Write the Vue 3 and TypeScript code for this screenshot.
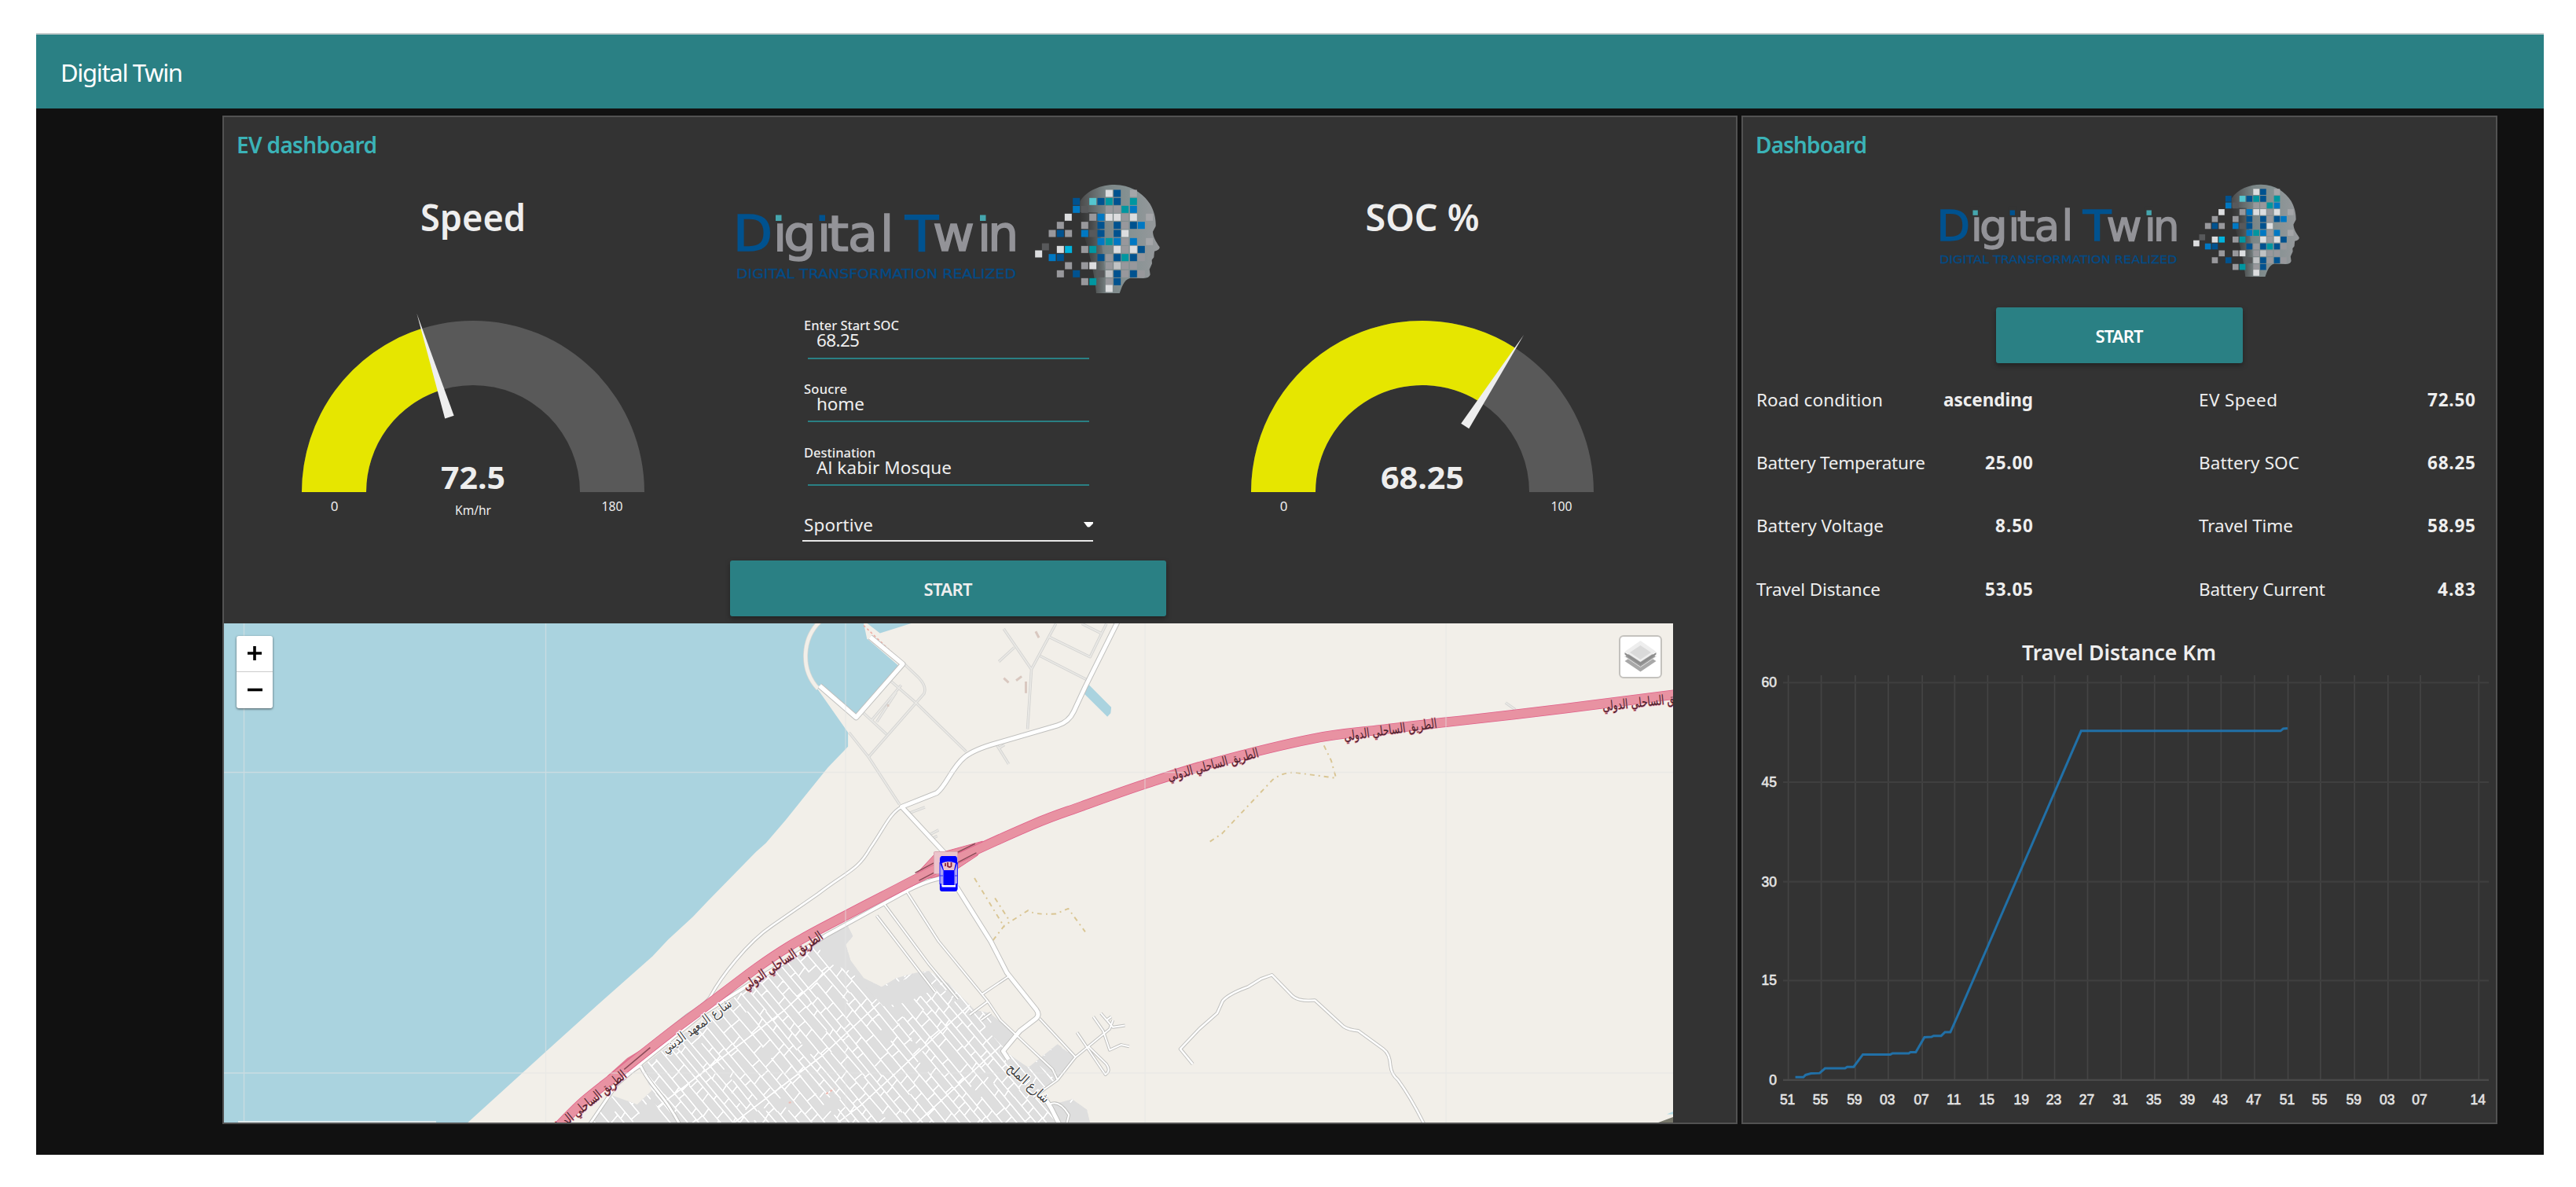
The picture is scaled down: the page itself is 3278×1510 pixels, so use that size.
<script setup lang="ts">
interface Gauge { title: string; value: number; text: string; unit: string; max: number; tw: number; vw: number }
interface Road { d: string; w: number }

const vFit = {
  mounted(el: HTMLElement, binding: { value: number }) {
    const n = (el.textContent ?? '').trim().length
    if (n < 2) return
    const spacing = (binding.value - el.getBoundingClientRect().width) / (n - 1)
    el.style.letterSpacing = `${spacing}px`
    el.style.marginRight = `${-spacing}px`
  },
}

const gauges: Gauge[] = [
  { title: 'Speed', value: 72.5, text: '72.5', unit: 'Km/hr', max: 180, tw: 134, vw: 82 },
  { title: 'SOC %', value: 68.25, text: '68.25', unit: '', max: 100, tw: 145, vw: 106 },
]
const CX = 300
const CY = 406
function polar(r: number, f: number) {
  const a = Math.PI * f
  return [CX - r * Math.cos(a), CY - r * Math.sin(a)]
}
function arc(from: number, to: number) {
  const [a, b, c, d] = [polar(218, from), polar(218, to), polar(136, to), polar(136, from)]
  return `M${a} A218 218 0 0 1 ${b} L${c} A136 136 0 0 0 ${d} Z`
}
function needle(f: number) {
  const [x, y] = polar(100, f)
  const a = Math.PI * f
  const nx = Math.sin(a) * 6
  const ny = -Math.cos(a) * 6
  return `M${x + nx} ${y + ny} L${polar(238, f)} L${x - nx} ${y - ny} Z`
}

const fields = [
  { label: 'Enter Start SOC', value: '68.25', lw: 121, vw: 55 },
  { label: 'Soucre', value: 'home', lw: 55, vw: 61 },
  { label: 'Destination', value: 'Al kabir Mosque', lw: 91, vw: 172 },
]
const readings = [
  { label: 'Road condition', value: 'ascending', lw: 161, vw: 114 },
  { label: 'EV Speed', value: '72.50', lw: 100, vw: 61 },
  { label: 'Battery Temperature', value: '25.00', lw: 215, vw: 61 },
  { label: 'Battery SOC', value: '68.25', lw: 128, vw: 61 },
  { label: 'Battery Voltage', value: '8.50', lw: 162, vw: 48 },
  { label: 'Travel Time', value: '58.95', lw: 120, vw: 61 },
  { label: 'Travel Distance', value: '53.05', lw: 158, vw: 61 },
  { label: 'Battery Current', value: '4.83', lw: 161, vw: 48 },
]

// Logo
const ink: Record<string, string> = {
  W: '#dcdddf', B: '#00528f', U: '#0078c3', T: '#0096a0', G: '#98989c', L: '#a5a6a9', D: '#58595b', C: '#55c6cf', Y: '#00b2dc', S: '#c0c2c4',
}
const mosaic: [number, string][] = [
  [78, '574W 605B 667L'],
  [109, '449B 512C 543B 574T 605B 667T'],
  [139, '449U 481D 574G 605G 635T 667U'],
  [169, '418W 512G 543U 574W 605W 635G 667W 728L'],
  [200, '388G 481G 543B 605B 635G 667B 697U'],
  [231, '357G 388B 419G 481U 512D 543B 605B 635W'],
  [262, '543U 574T 605U 635G 667U 728L'],
  [282, '331D'],
  [309, '305W'],
  [292, '388W 419Y 481G 512T 605W 635G 667W 697B'],
  [323, '357U 388B 543B 574G 605B 635T 667B 697G'],
  [354, '419G 481G 512W 574G 605S 635G 667G'],
  [385, '388G 449B 543D 574S 605B 635G 667B 697G'],
  [415, '481G 512T 574G 605B'],
  [441, '574W'],
]
const cells = mosaic.flatMap(([y, row]) =>
  row.split(' ').map((c) => ({ x: parseInt(c) - 13.5, y: y - 13.5, c: ink[c.slice(-1)] })),
)

// Chart
const cx = (v: number) => 2200 + v / 1.4545
const cy = (v: number) => 780 + v / 2.148
const xt = [110, 171, 234, 295, 358, 418, 479, 543, 603, 664, 726, 788, 850, 911, 973, 1035, 1095, 1158, 1220, 1280, 1388]
const xl = ['51', '55', '59', '03', '07', '11', '15', '19', '23', '27', '31', '35', '39', '43', '47', '51', '55', '59', '03', '07', '14']
const yTicks = [['60', 192], ['45', 464], ['30', 736], ['15', 1006], ['0', 1278]].map(([t, v]) => ({ t, y: cy(v as number) }))
const xTicks = xt.map((v, i) => ({ t: xl[i], x: cx(v) }))
const series = '123,1270 138,1270 142,1264 152,1260 168,1259 178,1246 215,1246 219,1242 231,1242 248,1208 299,1208 303,1205 333,1205 336,1202 346,1202 362,1161 375,1160 379,1157 393,1157 400,1147 410,1147 428,1087 652,324 1021,324 1026,318 1034,317'
  .split(' ').map((p) => { const [a, b] = p.split(',').map(Number); return `${cx(a)},${cy(b)}` }).join(' ')

// Map
function smooth(list: string) {
  const p = list.split(' ').map((s) => s.split(',').map(Number))
  let d = `M${p[0]}`
  for (let i = 0; i < p.length - 1; i++) {
    const a = p[Math.max(i - 1, 0)], b = p[i], c = p[i + 1], e = p[Math.min(i + 2, p.length - 1)]
    d += ` C${b[0] + (c[0] - a[0]) / 6},${b[1] + (c[1] - a[1]) / 6} ${c[0] - (e[0] - b[0]) / 6},${c[1] - (e[1] - b[1]) / 6} ${c}`
  }
  return d
}
const highway = smooth('-455,1460 -378,1390 -281,1318 -120,1200 10,1110 150,1012 250,950 350,898 540,806 740,712 1000,602 1150,550 1343,487 1558,425 1857,358 2067,332 2266,311 2477,289 2732,260 2975,231')
const roads: Road[] = [
  { w: 5.5, d: 'M345 207 L457 297 L600 145 L500 68' },
  { w: 5, d: 'M1262 20 L1160 210 L1125 280 Q1110 310 1075 320 L890 370 Q820 388 790 410 C750 440 735 490 705 512 L597 552 L735 690' },
  { w: 5, d: 'M765 780 L870 935 L920 1025 L1010 1130 Q1022 1145 1008 1156 L960 1190 L908 1248 L925 1272 M1035 1380 L1055 1410 L1085 1465' },
  { w: 4, d: 'M740 752 Q690 755 615 790 L365 918 L215 1008 L-20 1145 L-200 1280 L-300 1360' },
  { w: 2.6, d: 'M597 552 C560 570 545 610 500 670 C460 735 430 735 340 800 L200 890 C120 940 40 1040 10 1092 Q0 1110 -60 1145 L-175 1230' },
  { w: 3, d: 'M-205 1290 Q-190 1320 -150 1365 Q-110 1410 -80 1465 M-205 1290 L-290 1340 M-290 1360 L-360 1455' },
  { w: 2, d: 'M610 790 L710 935 L860 1105 L900 1160 L1060 1300 L1075 1330 L1000 1380 M540 825 L680 1000 L770 1100 M520 862 L700 1080 M845 1085 L925 1035 M805 1145 L860 1107 M1020 1155 L1130 1265 L1075 1330 M840 1160 L870 1140 M1130 1265 L1235 1185 L1245 1160 M1135 1195 L1222 1315 Q1240 1305 1225 1285 L1170 1235 M1185 1150 L1215 1190 L1235 1245 L1270 1230 L1295 1235 M1208 1140 L1245 1180 L1282 1175 M1225 1160 L1240 1150' },
  { w: 2.5, d: 'M1490 1285 L1452 1242 L1510 1185 L1565 1140 L1582 1105 Q1600 1085 1660 1065 L1700 1042 L1733 1031 L1795 1090 Q1815 1108 1865 1103 L1953 1178 Q1970 1188 1998 1190 L2075 1242 Q2095 1255 2097 1290 Q2100 1315 2120 1330 Q2160 1380 2205 1465' },
  { w: 2, d: 'M1050 1400 Q1080 1385 1110 1430 L1100 1465' },
]
const lanes =
  'M435 340 L495 410 L590 545 M495 410 L665 230 Q675 210 650 185 L605 145 M565 195 L640 255 L795 395 M480 285 L550 345 M505 305 L595 205 M520 310 L580 225 M910 45 L995 160 L983 330 M895 138 L942 98 M995 160 L1070 30 M1050 68 L1175 125 L1225 30 M1022 122 L1165 190 M1150 30 L1210 58 M885 370 L925 430 M895 385 L912 375 M620 570 L668 553 M685 630 L710 618 M690 642 L706 635 M2450 255 L2480 275'
const tracks = 'M820 755 L912 895 M883 812 L930 880 M877 932 L912 890 L985 847 Q1000 860 1070 857 L1108 842 L1160 908 M1543 651 L1580 628 L1735 475 Q1770 450 1810 455 L1930 470 L1915 420 L1890 372'
const city = 'M430 890 L447 920 L425 945 L440 990 L480 1040 L535 1065 L580 1040 L640 1025 L680 1020 L740 1055 L820 1130 L868 1140 L945 1200 L912 1248 L985 1295 L1075 1228 L1130 1265 L1075 1330 L1010 1375 L1060 1400 L1120 1385 L1165 1415 L1178 1465 L-375 1465 L-290 1375 L-215 1400 L-170 1360 L-205 1295 L-60 1190 L150 1050 L360 915 Z'

let seed = 11
const rnd = () => { seed = (seed * 16807) % 2147483647; return seed / 2147483647 }
function streets() {
  const a = (50 * Math.PI) / 180
  const pt = (u: number, v: number) =>
    `${(765 + u * Math.cos(a) - v * Math.sin(a)).toFixed(1)} ${(557 + u * Math.sin(a) + v * Math.cos(a)).toFixed(1)}`
  let d = ''
  for (let v = -330; v < 400;) {
    const step = (v > 90 && v < 190 ? 6 : 8) + rnd() * 7
    for (let u = -330; u < 330;) {
      const len = 40 + rnd() * 160
      d += `M${pt(u, v)} L${pt(u + len, v + rnd() * 4 - 2)}`
      u += len + (rnd() < 0.3 ? 18 : 0)
    }
    for (let u = -330 + rnd() * 20; u < 330; u += 10 + rnd() * 34) d += `M${pt(u, v)} L${pt(u + rnd() * 3, v + step)}`
    v += step
  }
  for (const u of [-95, -20, 60, 125]) d += `M${pt(u, -260)} L${pt(u + 12, 0)} L${pt(u - 6, 380)}`
  return d
}
const streetPath = streets()

const labels = [
  { t: 'الطريق الساحلي الدولي', x: 1485, y: 141, r: -8, w: 119 },
  { t: 'الطريق الساحلي الدولي', x: 1260, y: 185, r: -15, w: 119 },
  { t: 'الطريق الساحلي الدولي', x: 1814, y: 105, r: -6, w: 119 },
  { t: 'الطريق الساحلي الدولي', x: 714, y: 434, r: -34, w: 119 },
  { t: 'الطريق الساحلي الدولي', x: 467, y: 614, r: -39, w: 119 },
  { t: 'شارع المعهد الديني', x: 605, y: 517, r: -36, w: 105 },
  { t: 'شارع الملح', x: 1020, y: 589, r: 42, w: 66 },
]
</script>

<template>
  <svg class="defs" width="0" height="0">
    <defs>
      <linearGradient id="skull" x1="0" x2="1">
        <stop offset="0" stop-color="#4a4a4a" />
        <stop offset=".12" stop-color="#5c6061" />
        <stop offset=".32" stop-color="#7a8586" />
        <stop offset=".6" stop-color="#859192" />
        <stop offset="1" stop-color="#97999c" />
      </linearGradient>
      <linearGradient id="nape" x1="0" x2="1">
        <stop offset="0" stop-color="#333" />
        <stop offset="1" stop-color="#333" stop-opacity="0" />
      </linearGradient>
      <symbol id="brand" viewBox="0 0 560 160">
        <g font-family="DejaVu Sans, sans-serif" font-size="62" stroke-width="1.600">
          <g fill="#00528f" stroke="#00528f">
            <text y="98.500" x="3" textLength="50" lengthAdjust="spacingAndGlyphs">D</text>
            <text y="98.500" x="222" textLength="42" lengthAdjust="spacingAndGlyphs">T</text>
          </g>
          <g fill="#939398" stroke="#939398">
            <text y="98.500" x="54">i</text>
            <text y="98.500" x="67" textLength="42" lengthAdjust="spacingAndGlyphs">g</text>
            <text y="98.500" x="110">i</text>
            <text y="98.500" x="123" textLength="27" lengthAdjust="spacingAndGlyphs">t</text>
            <text y="98.500" x="149">a</text>
            <text y="98.500" x="190">l</text>
            <text y="98.500" x="257" textLength="53" lengthAdjust="spacingAndGlyphs">w</text>
            <text y="98.500" x="314 327">in</text>
          </g>
        </g>
        <rect x="54" y="48" width="13" height="14" fill="#333" />
        <rect x="57" y="53.500" width="7.500" height="7.500" fill="#45a6ae" />
        <rect x="110" y="48" width="13" height="14" fill="#333" />
        <rect x="112.500" y="53.500" width="7.500" height="7.500" fill="#00528f" />
        <rect x="314" y="48" width="13" height="14" fill="#333" />
        <rect x="317" y="53.500" width="7.500" height="7.500" fill="#45a6ae" />
        <text x="7" y="133.500" fill="#034b86" stroke="#034b86" stroke-width=".3" font-family="DejaVu Sans, sans-serif" font-size="16.500" textLength="356" lengthAdjust="spacingAndGlyphs">DIGITAL TRANSFORMATION REALIZED</text>
        <g transform="translate(290 0) scale(.33333)">
          <path d="M595 45 C660 45 705 80 730 118 C748 148 753 180 752 203 L741 224 C742 245 752 260 767 283 Q768 293 747 299 L745 322 L737 332 L738 346 L728 368 L731 388 Q728 402 705 402 L655 401 C628 408 622 440 614 459 L525 459 C520 400 505 330 485 260 C470 210 460 160 463 108 C490 65 545 45 595 45 Z" fill="url(#skull)" />
          <path d="M455 150 H530 L570 459 H515 L480 260 Z" fill="url(#nape)" />
          <rect v-for="(c, i) in cells" :key="i" :x="c.x" :y="c.y" width="27" height="27" :fill="c.c" />
        </g>
      </symbol>
    </defs>
  </svg>

  <div class="page">
    <div class="app">
      <header><span v-fit="156">Digital Twin</span></header>
      <main>
        <section class="panel ev">
          <h2><span v-fit="179">EV dashboard</span></h2>
          <div class="upper">
            <template v-for="(g, i) in gauges" :key="g.title">
              <svg class="gauge" width="600" height="573" viewBox="0 0 600 573" text-anchor="middle">
                <text x="300" y="74" font-size="47" font-weight="600" :textLength="g.tw" lengthAdjust="spacingAndGlyphs">{{ g.title }}</text>
                <path :d="arc(0, 1)" fill="#595959" />
                <path :d="arc(0, g.value / g.max)" fill="#e6e600" />
                <path :d="needle(g.value / g.max)" fill="#eee" />
                <text x="300" y="401.500" font-size="39.500" font-weight="700" :textLength="g.vw" lengthAdjust="spacingAndGlyphs">{{ g.text }}</text>
                <text v-if="g.unit" x="300" y="435" font-size="17" textLength="46" lengthAdjust="spacingAndGlyphs">{{ g.unit }}</text>
                <text x="123.500" y="430" font-size="17">0</text>
                <text x="477" y="430" font-size="17" textLength="27" lengthAdjust="spacingAndGlyphs">{{ g.max }}</text>
              </svg>
              <div v-if="i === 0" class="center">
                <svg class="logo" width="560" height="160"><use href="#brand" /></svg>
                <div class="form">
                  <div v-for="f in fields" :key="f.label" class="field">
                    <div class="lab"><span v-fit="f.lw">{{ f.label }}</span></div>
                    <div class="val"><span v-fit="f.vw">{{ f.value }}</span></div>
                  </div>
                  <div class="select">
                    <span v-fit="88">Sportive</span>
                    <svg width="12" height="7"><path d="M0 0H12V2L8 6Q6 7 4.500 6Z" fill="#fff" /></svg>
                  </div>
                </div>
                <button class="start wide"><span v-fit="62">START</span></button>
              </div>
            </template>
          </div>

          <div class="map">
            <svg width="1843.500" height="635" viewBox="0 0 1843.500 635">
              <defs>
                <clipPath id="city-clip"><path :d="city" transform="translate(615 -13) scale(.4146 .4464)" /></clipPath>
              </defs>
              <rect width="1844" height="635" fill="#f2efe9" />
              <g class="geo" transform="translate(615 -13) scale(.4146 .4464)">
                <path fill="#aad3df" d="M-1490 20 H480 L500 68 L600 145 L457 297 L345 207 L330 205 L432 340 L432 380 L370 440 L240 590 L180 655 L150 680 L0 822 L-44 865 L-120 930 L-168 978 L-335 1115 L-496 1250 L-739 1455 L-760 1465 L-1490 1465 Z" />
                <path fill="#f2efe9" d="M478 20 L610 150 L600 160 L490 72 Z" />
                <path fill="#aad3df" d="M478 20 L530 57 L640 25 Z M1170 203 L1240 268 L1238 285 L1228 295 L1155 228 Z" />
                <path class="ln" d="M350 20 C290 70 285 160 340 215" stroke="#d8d8d4" stroke-width="6" />
                <path class="ln" d="M350 20 C290 70 285 160 340 215" stroke="#f2efe9" stroke-width="4.500" />
                <path class="ln" d="M480 35 L612 152" stroke="#f0a9a0" stroke-width="1.500" stroke-dasharray="3 3" />
                <path :d="city" fill="#dedede" />
              </g>
              <g clip-path="url(#city-clip)">
                <path :d="streetPath" fill="none" stroke="#cfcfcf" stroke-width="2.800" />
                <path :d="streetPath" fill="none" stroke="#fff" stroke-width="2" />
                <g class="geo" transform="translate(615 -13) scale(.4146 .4464)" fill="#dedede">
                  <path d="M375 900 L440 890 L460 990 L540 1065 L680 1020 L690 1075 L610 1110 L540 1120 L440 1020 L380 1000 L330 940 Z M-170 1380 L-240 1465 H-120 Z M880 1150 L945 1200 L912 1240 L860 1190 Z M985 1300 L1075 1230 L1130 1265 L1070 1330 L1020 1290 Z M1060 1400 H1180 V1465 H1080 Z" />
                </g>
              </g>
              <g class="geo" transform="translate(615 -13) scale(.4146 .4464)">
                <path class="ln" :d="lanes" stroke="#d3d3d1" stroke-width="3.500" />
                <path class="ln" :d="lanes" stroke="#e9e8e5" stroke-width="1.800" />
                <path class="ln" :d="tracks" stroke="#d9c593" stroke-width="1.900" stroke-dasharray="6 5 2 5" />
                <path v-for="(r, i) in roads" :key="'c' + i" class="ln" :d="r.d" stroke="#bfbfbd" :stroke-width="r.w + 1.900" />
                <path v-for="(r, i) in roads" :key="'f' + i" class="ln" :d="r.d" stroke="#fff" :stroke-width="r.w" />
                <path d="M620 765 L695 690 L735 678 L845 650 L830 690 L765 730 L700 752 Z" fill="#e892a2" stroke="#e0648a" stroke-width="1" vector-effect="non-scaling-stroke" />
                <path class="ln" d="M-300 1325 L-240 1275 L-160 1230" stroke="#e07a92" stroke-width="8" />
                <path class="ln" :d="highway" stroke="#df5f88" stroke-width="12.500" />
                <path class="ln" :d="highway" stroke="#e892a2" stroke-width="11" />
                <path class="ln" d="M638 740 L695 712 M650 762 L695 740 M765 683 L822 657 M770 710 L826 683 M-255 1300 L-175 1238" stroke="#8a4a58" stroke-width="1.500" />
                <path class="ln" d="M910 185 L925 198 M948 192 L965 180 M978 195 V228 M1008 52 L1018 70 M552 263 H558" stroke="#d9c8c0" stroke-width="3" />
                <path class="ln" d="M365 1370 L390 1355 M250 1395 L265 1393" stroke="#f0b8b0" stroke-width="2" stroke-dasharray="3 3" />
                <path d="M2895 1460 L2975 1432 V1460 Z" fill="#77776a" />
                <path d="M2945 1428 L2975 1416 V1428 Z" fill="#b5dde6" />
              </g>
              <path d="M25.500 0V635M409.500 0V635M791 0V635M1172 0V635M1555 0V635M0 189.500H1844M0 572H1844" stroke="#e3e3e3" stroke-opacity=".55" stroke-width="1.300" />
              <g class="names" text-anchor="middle">
                <text v-for="(l, i) in labels" :key="i" :transform="`translate(${l.x} ${l.y}) rotate(${l.r})`" :textLength="l.w" lengthAdjust="spacingAndGlyphs" :class="{ street: i > 4 }">{{ l.t }}</text>
              </g>
              <rect x="18" y="633" width="252" height="2" fill="#dfeaec" />
              <!-- vehicle marker -->
              <g transform="translate(903 290)">
                <rect x=".5" y=".5" width="30" height="28" rx="1" fill="#ecc4cc" stroke="#d9a5b0" />
                <rect x="7.500" y="6" width="23" height="45" rx="4" fill="#a9a3f5" />
                <path d="M10 6H28Q30 7 30 10V15L27 24H12L8 15V10Q8 7 10 6Z" fill="#00f" />
                <path d="M10.500 15Q19 11 28 15L26 24H13Z" fill="#ecc4cc" />
                <path d="M15 15V19M18 14V19Q21 21 22.500 19V14" stroke="#8c2540" stroke-width="1.800" fill="none" />
                <path d="M12.500 24H26.500V43H12.500ZM8 41H10V44H28V41H30.500V48Q30 51 27 51H11Q8 51 8 48Z" fill="#00f" />
                <path d="M8 31H12M27 31H31M8 14V42M30.500 14V42" stroke="#2a2af8" stroke-width="1" />
                <path d="M10.500 43H28V45.500H10.500Z" fill="#fff" />
              </g>
            </svg>
            <div class="zoom">
              <div><svg width="20" height="20"><path d="M10 1V19M1 10H19" stroke="#000" stroke-width="3.600" /></svg></div>
              <div><svg width="20" height="20"><path d="M1 9.500H20" stroke="#000" stroke-width="3.600" /></svg></div>
            </div>
            <div class="layers">
              <svg width="41" height="40" viewBox="0 0 41 40">
                <path d="M.5 26L20.500 13L40.500 26L20.500 39.500Z" fill="#a8a8a8" />
                <path d="M.5 20L20.500 7L40.500 20L20.500 33.500Z" fill="#9a9a9a" stroke="#e4e4e4" stroke-width="1" />
                <path d="M.5 15L20.500 28L40.500 15V17.500L20.500 31L.5 17.500Z" fill="#8d8d8d" />
                <path d="M.5 14L20.500 0L40.500 14L20.500 27Z" fill="#eee" />
                <path d="M7 15L20.500 6L34 15L20.500 24Z" fill="#dadada" />
              </svg>
            </div>
          </div>
        </section>

        <section class="panel side">
          <h2><span v-fit="142">Dashboard</span></h2>
          <svg class="logo2" width="476" height="136" viewBox="0 0 560 160"><use href="#brand" width="560" height="160" /></svg>
          <button class="start"><span v-fit="61">START</span></button>
          <div class="readings">
            <div v-for="r in readings" :key="r.label" class="reading">
              <span v-fit="r.lw">{{ r.label }}</span>
              <b v-fit="r.vw">{{ r.value }}</b>
            </div>
          </div>
          <svg class="chart" width="958" height="637" viewBox="2218 791 958 637">
            <text x="2696.500" y="840.500" class="ct" text-anchor="middle" textLength="247" lengthAdjust="spacingAndGlyphs">Travel Distance Km</text>
            <path v-for="t in xTicks" :key="'v' + t.x" :d="`M${t.x} 860V1376`" stroke="#444" stroke-width="1.700" />
            <path v-for="t in yTicks" :key="'h' + t.y" :d="`M2269 ${t.y}H3167`" :stroke="t.t === '0' ? '#4a4a4a' : '#3f3f3f'" stroke-width="2.200" />
            <g class="ticks">
              <text v-for="t in yTicks" :key="'y' + t.y" x="2261" :y="t.y + 6" text-anchor="end">{{ t.t }}</text>
              <text v-for="t in xTicks" :key="'x' + t.x" :x="t.x - 1" y="1405.500" text-anchor="middle">{{ t.t }}</text>
            </g>
            <polyline :points="series" fill="none" stroke="#1f77b4" stroke-width="3" stroke-opacity=".9" />
          </svg>
        </section>
      </main>
    </div>
  </div>
</template>

<style>
body { margin: 0; background: #fff; }
</style>

<style scoped>
.defs { position: absolute; }
.page {
  box-sizing: border-box; width: 3278px; height: 1510px; padding: 42px 41px 0 46px; background: #fff; overflow: hidden;
  font-family: "Noto Sans", "Open Sans", sans-serif; color: #eee;
}
svg { display: block; flex: none; }
span, b { display: inline-block; white-space: nowrap; }
.app { box-sizing: border-box; height: 1427px; background: #111; border-top: 2px solid #c4cccc; }
header { height: 91px; padding: 3px 31px 0; line-height: 91px; font-size: 31px; color: #fff; background: #2a8084; }
main { display: flex; gap: 5px; padding: 9px 0 0 237px; }
.panel { box-sizing: border-box; height: 1283px; background: #333; border: 2px solid #525252; overflow: hidden; }
.ev { width: 1928px; }
.side { width: 962px; }
h2 { margin: 0; padding-left: 16px; height: 71px; line-height: 71px; font-size: 28px; font-weight: 600; color: #3bb3b8; }
.upper { display: flex; padding-left: 17px; height: 573px; }
.gauge { fill: #eee; }
.center { width: 608px; height: 573px; display: flex; flex-direction: column; }
.logo { margin-left: 28px; }
.form { width: 370px; margin: 25.400px 0 0 119px; font-size: 22.500px; }
.field { height: 80.600px; }
.lab { padding-left: 2px; height: 18px; line-height: 18px; font-size: 16.500px; font-weight: 500; }
.val { margin: 0 5px 0 7px; padding-left: 11px; height: 31.500px; line-height: 20px; border-bottom: 2px solid #2a8084; }
.select { display: flex; justify-content: space-between; align-items: center; margin-top: 6.600px; padding-left: 2px; height: 33px; border-bottom: 2.500px solid #e8e8e8; }
.select span { line-height: 28px; margin-top: -5px; }
.select svg { margin-top: -5px; }
.start {
  display: flex; align-items: center; justify-content: center; padding: 0; border: 0; border-radius: 3px; height: 71px; flex: none;
  width: 314px; background: #2a8084; color: #fff; font: 600 22px "Noto Sans", "Open Sans", sans-serif; box-shadow: 0 3px 6px rgba(0, 0, 0, .35);
}
.wide { width: 555px; margin: auto 0 9px 27px; color: #eee; }
.map { position: relative; width: 1843.500px; height: 635px; overflow: hidden; }
.ln { fill: none; vector-effect: non-scaling-stroke; stroke-linejoin: round; }
.names text { font: 17px "DejaVu Sans", sans-serif; fill: #4a1f2c; stroke: #e892a2; stroke-width: 1.500px; paint-order: stroke; direction: rtl; }
.names .street { fill: #444; stroke: #fff; stroke-width: 2.500px; }
.zoom { position: absolute; left: 15.500px; top: 15.500px; width: 46px; border-radius: 3px; background: #fff; box-shadow: 0 1px 3px rgba(0, 0, 0, .6); }
.zoom div { display: flex; align-items: center; justify-content: center; height: 45.500px; }
.zoom div:first-child { border-bottom: 1px solid #ccc; }
.layers { position: absolute; right: 14px; top: 14.500px; width: 51px; height: 51px; display: flex; align-items: center; justify-content: center; border: 2px solid #c4c2be; border-radius: 6px; background: #fff; }
.side { display: flex; flex-direction: column; }
.side h2 { flex: none; }
.logo2 { margin: 2px 0 0 244px; }
.side .start { margin: 33px 0 0 322px; }
.readings { display: grid; grid-template-columns: 352px 352px; column-gap: 211px; margin: 6.500px 0 0 17px; line-height: 80.400px; font-size: 22.500px; }
.reading { display: flex; justify-content: space-between; height: 80.400px; }
.ct { font-size: 27px; font-weight: 600; fill: #eee; }
.ticks { font: 17.500px "Liberation Sans", sans-serif; fill: #e4e4e4; stroke: #e4e4e4; stroke-width: .6px; }
</style>
